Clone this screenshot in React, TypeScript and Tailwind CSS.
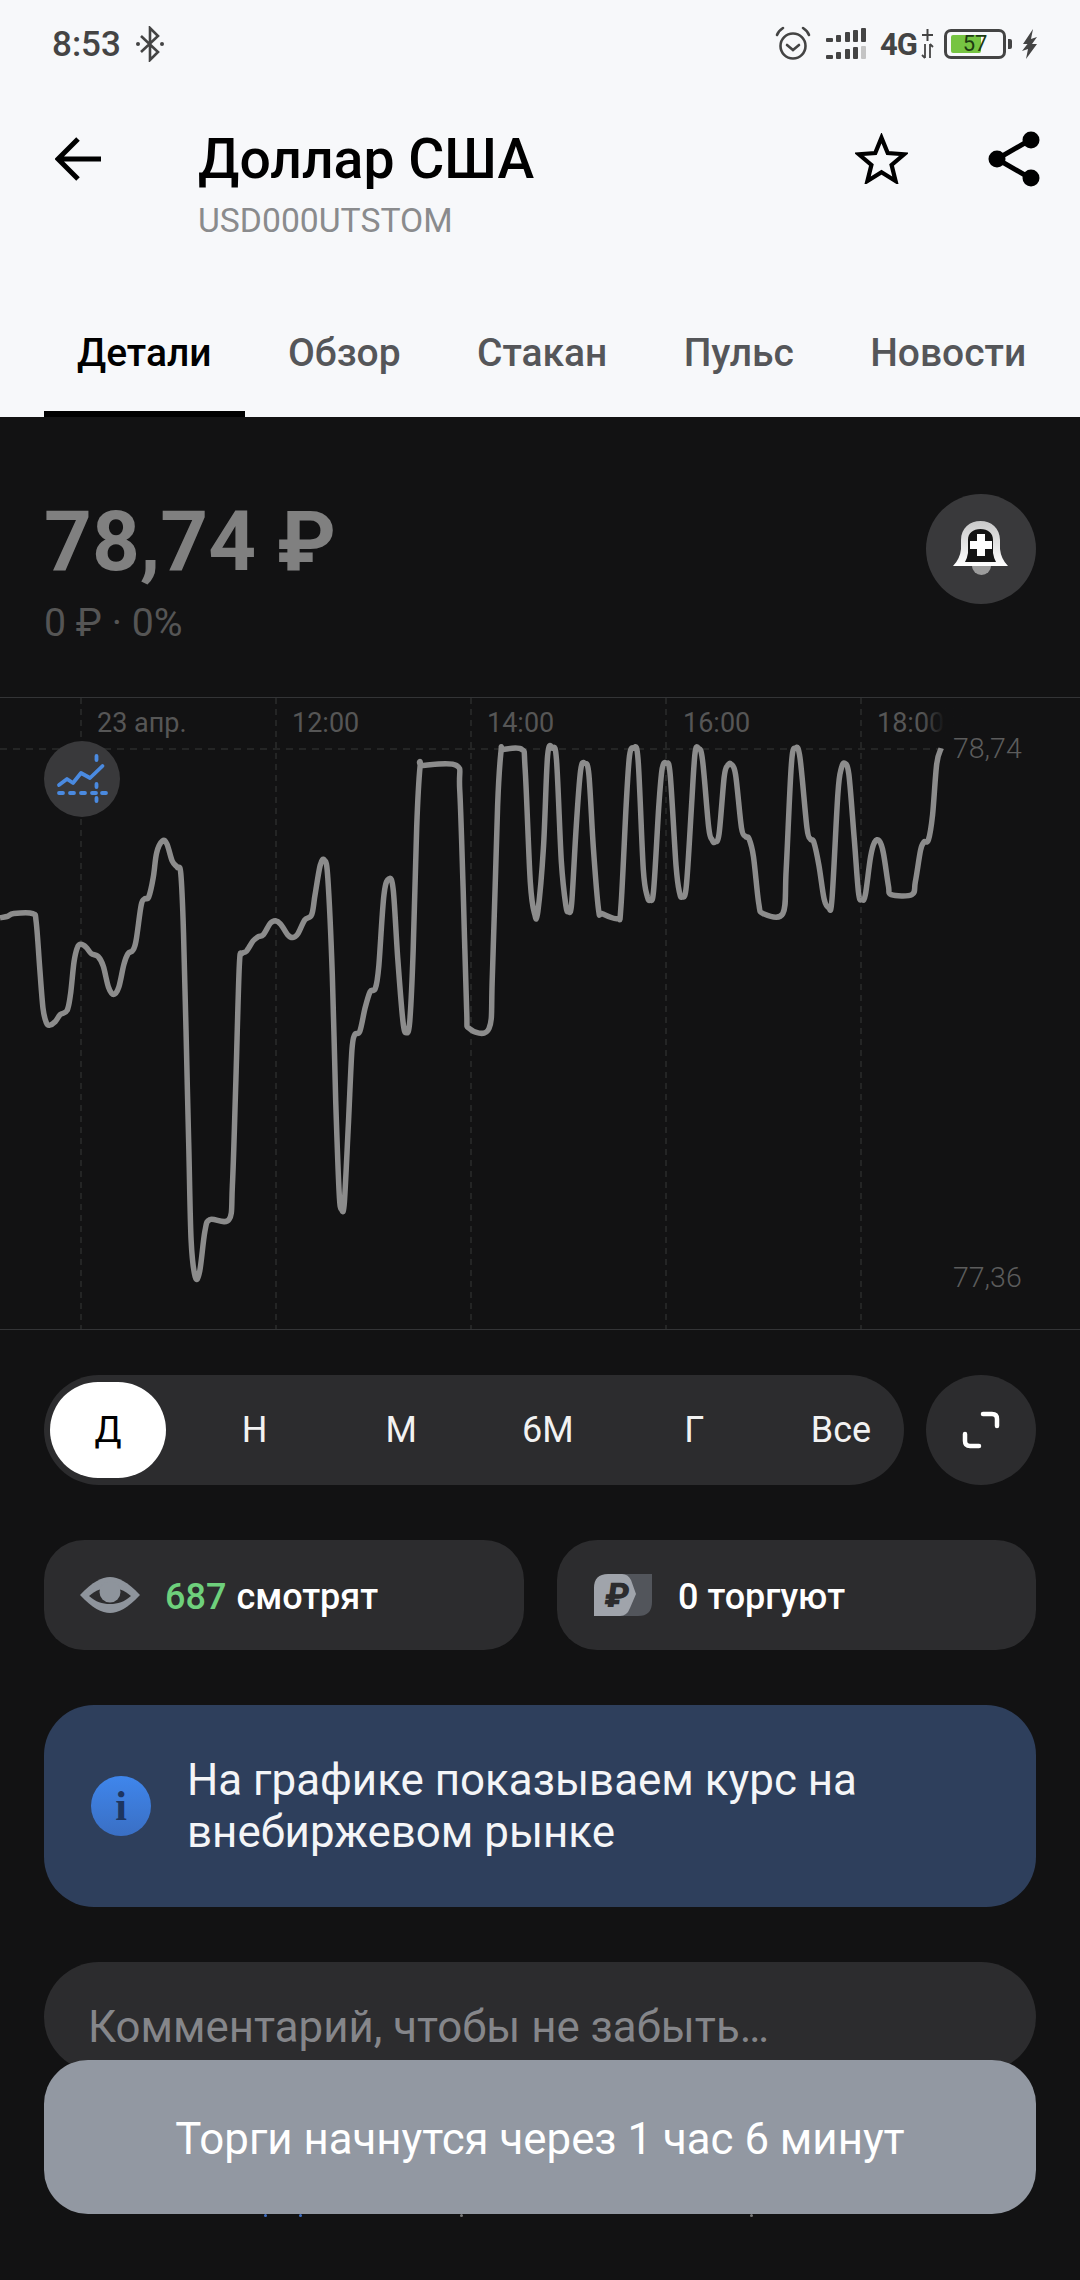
import React from "react";

const left: [number, number][] = [[0,565],[20,562],[40,555],[95,555],[105,575],[115,680],[125,780],[135,815],[145,820],[160,812],[175,795],[195,785],[205,745],[215,670],[225,635],[235,628],[250,635],[265,650],[285,657],[300,680],[315,730],[330,747],[345,730],[360,675],[372,650],[385,643],[395,620],[410,535],[420,520],[432,515],[445,470],[455,410],[472,382],[485,390],[500,430],[515,445],[525,460],[533,600],[540,830],[548,1100],[555,1330],[567,1418],[580,1405],[595,1310],[610,1282],[665,1282],[675,1200],[685,950],[695,680],[702,650],[715,645],[735,620],[750,610],[765,605],[785,578],[800,572],[815,580],[835,605],[850,612],[865,603],[885,570],[905,558],[915,510],[930,440],[942,428],[952,470],[965,700],[975,1000],[985,1220],[992,1258],[1000,1240],[1012,1050],[1022,880],[1030,843],[1045,835],[1060,780],[1075,740],[1090,733],[1100,680],[1115,510],[1130,472],[1142,500],[1155,660],[1170,810],[1180,838],[1190,810],[1200,640],[1210,350],[1220,205],[1228,203],[1325,203],[1335,260],[1345,500],[1355,780],[1363,828],[1420,828],[1430,700],[1445,300],[1455,170],[1462,165],[1515,165],[1525,210],[1540,480],[1553,557],[1562,550]];
const right: [number, number][] = [[10,400],[22,180],[36,162],[48,190],[62,430],[75,535],[83,550],[92,530],[105,350],[118,215],[130,198],[142,225],[155,400],[170,545],[180,555],[225,567],[235,540],[250,300],[260,180],[272,162],[285,190],[300,450],[312,515],[320,522],[330,500],[345,300],[355,210],[367,198],[378,225],[395,440],[405,505],[413,515],[425,490],[440,300],[450,175],[460,162],[472,190],[490,350],[500,380],[508,385],[520,365],[535,230],[545,203],[555,200],[568,225],[585,350],[597,372],[607,377],[620,420],[635,530],[648,555],[705,555],[715,450],[730,200],[742,162],[755,185],[775,350],[785,378],[795,385],[810,440],[825,520],[838,540],[848,520],[865,270],[875,210],[885,198],[897,225],[912,370],[925,505],[935,522],[945,510],[960,420],[972,385],[985,382],[997,410],[1012,490],[1020,510],[1080,510],[1090,480],[1105,405],[1115,385],[1128,380],[1140,320],[1152,200],[1165,162]];

const pts: [number, number][] = [
  ...left.map(([x, y]) => [x / 2.904, 680 + y / 2.376 - 698] as [number, number]),
  ...right.map(([x, y]) => [540 + x / 2.904, 680 + y / 2.376 - 698] as [number, number]),
];

function smooth(p: [number, number][]) {
  let d = `M${p[0][0].toFixed(1)} ${p[0][1].toFixed(1)}`;
  for (let i = 0; i < p.length - 1; i++) {
    const a = p[Math.max(0, i - 1)], b = p[i], c = p[i + 1], e = p[Math.min(p.length - 1, i + 2)];
    const k = 6;
    d += ` C${(b[0] + (c[0] - a[0]) / k).toFixed(1)} ${(b[1] + (c[1] - a[1]) / k).toFixed(1)} ${(c[0] - (e[0] - b[0]) / k).toFixed(1)} ${(c[1] - (e[1] - b[1]) / k).toFixed(1)} ${c[0].toFixed(1)} ${c[1].toFixed(1)}`;
  }
  return d;
}

const StatusIcons = () => (
  <div className="flex items-center">
    <svg width="36" height="36" viewBox="0 0 36 36" fill="none" stroke="#444" strokeWidth="2.6" strokeLinecap="round">
      <circle cx="18" cy="20" r="12.5" />
      <path d="M12 19l6 5 6-5" />
      <path d="M2 9c1-3 3-5 6-7M34 9c-1-3-3-5-6-7" />
    </svg>
    <svg className="ml-[15px]" width="41" height="32" viewBox="0 0 41 32" fill="#444">
      <rect x="0" y="10" width="7" height="4" rx="1" /><rect x="10" y="7" width="5" height="7" rx="1" /><rect x="19" y="4" width="5" height="10" rx="1" /><rect x="27" y="2" width="5" height="12" rx="1" /><rect x="35" y="0" width="5" height="14" rx="1" />
      <rect x="0" y="27" width="7" height="4" rx="1" /><rect x="10" y="24" width="5" height="7" rx="1" /><rect x="19" y="21" width="5" height="10" rx="1" /><rect x="27" y="19" width="5" height="12" rx="1" /><rect x="35" y="18" width="5" height="13" rx="1" fill="#c4c4c4" />
    </svg>
    <span className="ml-[13px] text-[31px] font-bold leading-none tracking-[-1px] text-[#444]">4G</span>
    <svg className="ml-[4px]" width="13" height="32" viewBox="0 0 13 32" fill="none" stroke="#444" strokeWidth="2">
      <path d="M6.500 1v12M1 7h11" />
      <path d="M4 16v14M1 27l3 3M9 30V16M9 16l3 3" strokeWidth="1.800" />
    </svg>
    <div className="relative ml-[10px] flex h-[30px] w-[62px] items-center justify-center rounded-[7px] border-[3px] border-[#444]">
      <div className="absolute left-[4px] top-[3px] h-[18px] w-[30px] rounded-[2px] bg-[#76c442]" />
      <span className="relative text-[22px] leading-none text-[#1d3a12]">57</span>
    </div>
    <div className="ml-[2px] h-[10px] w-[4px] rounded-r-[2px] bg-[#444]" />
    <svg className="ml-[9px]" width="17" height="30" viewBox="0 0 17 30" fill="#444">
      <path d="M12 0L2 15h4.500L1 22l6-2-2 10 11-15h-5l5-7-6 2z" />
    </svg>
  </div>
);

const Tab = ({ label, active }: { label: string; active?: boolean }) => (
  <div className={`relative flex h-full items-center whitespace-nowrap text-[39px] font-medium ${active ? "text-black" : "text-[#555659]"}`}>
    {label}
    {active && <div className="absolute bottom-0 left-[-33px] right-[-33px] h-[6px] bg-black" />}
  </div>
);

const ranges = ["Д", "Н", "М", "6М", "Г", "Все"];

const hours = [
  { x: 97, t: "23 апр." },
  { x: 292, t: "12:00" },
  { x: 487, t: "14:00" },
  { x: 683, t: "16:00" },
  { x: 877, t: "18:00" },
];

export default function App() {
  return (
    <div className="relative flex h-[2280px] w-[1080px] flex-col overflow-hidden bg-[#121213] [font-family:Roboto,sans-serif]">
      <div className="flex h-[417px] flex-col bg-[#f7f8fa]">
        <div className="flex h-[88px] items-center justify-between pl-[52px] pr-[42px]">
          <div className="flex items-center">
            <span className="text-[35px] font-medium leading-none text-[#444]">8:53</span>
            <svg className="ml-[14px]" width="30" height="36" viewBox="0 0 30 36" fill="none" stroke="#444" strokeWidth="2.600">
              <path d="M6 10l17 16-8 8V2l8 8L6 26" />
              <circle cx="3" cy="18" r="2" fill="#444" stroke="none" />
              <circle cx="27" cy="18" r="2" fill="#444" stroke="none" />
            </svg>
          </div>
          <StatusIcons />
        </div>
        <div className="flex h-[178px] items-start pl-[55px] pr-[40px]">
          <svg className="mt-[49px]" width="46" height="44" viewBox="0 0 46 44" fill="none" stroke="#000" strokeWidth="5">
            <path d="M46 22H4M23 2L3 22l20 20" />
          </svg>
          <div className="ml-[97px] flex-1 pt-[36px]">
            <div className="text-[55.300px] font-medium leading-[72px] text-black">Доллар США</div>
            <div className="mt-[6px] text-[33.700px] leading-[38px] text-[#8a8b8d]">USD000UTSTOM</div>
          </div>
          <svg className="mt-[45px]" width="53" height="51" viewBox="0 0 56 54" fill="none" stroke="#000" strokeWidth="4.500">
            <path d="M28 5l6.600 16.200 17.400 1.300-13.300 11.300 4.200 17L28 41.600l-14.900 9.200 4.200-17L4 22.500l17.400-1.300z" />
          </svg>
          <svg className="ml-[80px] mt-[43px]" width="52" height="56" viewBox="0 0 52 56" fill="none">
            <path d="M42 9L9 28l33 19" stroke="#000" strokeWidth="5" />
            <circle cx="43" cy="9" r="8.500" fill="#000" /><circle cx="9" cy="28" r="8.500" fill="#000" /><circle cx="43" cy="47" r="8.500" fill="#000" />
          </svg>
        </div>
        <div className="flex h-[151px] items-stretch gap-[76.300px] pl-[77px] pt-[23px]">
          <Tab label="Детали" active />
          <Tab label="Обзор" />
          <Tab label="Стакан" />
          <Tab label="Пульс" />
          <Tab label="Новости" />
        </div>
      </div>

      <div className="flex h-[280px] items-start justify-between px-[44px] pt-[81px]">
        <div>
          <div className="text-[83.500px] font-bold leading-[88px] text-[#808080]">78,74 ₽</div>
          <div className="mt-[15px] text-[39.300px] leading-[44px] text-[#555]">0 ₽ · 0%</div>
        </div>
        <div className="mt-[-4px] flex h-[110px] w-[110px] items-center justify-center rounded-full bg-[#39393b]">
          <svg className="mt-[-1px]" width="56" height="56" viewBox="0 0 56 56">
            <defs>
              <linearGradient id="bell" x1="0" y1="0" x2="0" y2="1">
                <stop offset="0" stopColor="#c9c9c9" /><stop offset="1" stopColor="#fff" />
              </linearGradient>
            </defs>
            <path d="M19 45H38A9.500 9 0 0 1 19 45Z" fill="#9c9c9c" />
            <path d="M8 19C8 7 17 0 27.500 0C38 0 47 7 47 19V28Q48 38 55 45H0Q7 38 8 28Z" fill="url(#bell)" />
            <path d="M15 19C15 12 20 8 27.500 8C35 8 40 12 40 19V32Q41 38 43 41H12Q14 38 15 32Z" fill="#141414" />
            <rect x="17" y="20" width="22" height="8" fill="#fff" /><rect x="24" y="13" width="8" height="22" fill="#fff" />
          </svg>
        </div>
      </div>

      <div className="relative h-[633px] border-y border-[#333436]">
        <svg className="absolute left-0 top-0" width="1080" height="631" viewBox="0 0 1080 631" fill="none">
          {[81, 276, 471, 666, 861].map((x) => (
            <line key={x} x1={x} y1="0" x2={x} y2="631" stroke="#2b2c2d" strokeWidth="1.500" strokeDasharray="6 5" />
          ))}
          <line x1="0" y1="51" x2="944" y2="51" stroke="#2b2c2d" strokeWidth="1.500" strokeDasharray="7 6" />
          <path d={smooth(pts)} stroke="#8c8c8c" strokeWidth="5.500" strokeLinejoin="round" />
        </svg>
        {hours.map((h) => (
          <span key={h.t} className="absolute top-[9px] whitespace-nowrap text-[27px] leading-[32px] text-[#565656]" style={{ left: h.x }}>{h.t}</span>
        ))}
        <div className="absolute left-[922px] top-[4px] h-[42px] w-[46px] bg-gradient-to-r from-transparent via-[#121213] to-[#121213]" />
        <span className="absolute left-[953px] top-[35px] text-[28.500px] font-light leading-[32px] text-[#5c5c5c]">78,74</span>
        <span className="absolute left-[953px] top-[564px] text-[28.500px] font-light leading-[32px] text-[#5c5c5c]">77,36</span>
        <div className="absolute left-[44px] top-[43px] flex h-[76px] w-[76px] items-center justify-center rounded-full bg-[#39393b]">
          <svg width="76" height="76" viewBox="0 0 76 76" fill="none" stroke="#4a8ae0" strokeWidth="3.800" strokeLinecap="round" strokeLinejoin="round">
            <path d="M15 44l8-6 6 4 8-10 9 5 12.500-12" />
            <path d="M15 52h4M26 52h4M37 52h4M48 52h4M58 52h4" />
            <path d="M52.500 15v4M52.500 43v3M52.500 57v3" />
          </svg>
        </div>
      </div>

      <div className="mt-[45px] flex justify-between px-[44px]">
        <div className="flex h-[110px] w-[860px] items-center gap-[30.600px] rounded-full bg-[#2c2c2e] pl-[6px]">
          {ranges.map((r, i) => (
            <div key={r} className={`flex h-[96px] w-[116px] shrink-0 items-center justify-center rounded-[48px] text-[36px] ${i === 0 ? "bg-white text-black" : "text-[#f2f2f2]"}`}>{r}</div>
          ))}
        </div>
        <div className="flex h-[110px] w-[110px] items-center justify-center rounded-full bg-[#2c2c2e]">
          <svg width="38" height="38" viewBox="0 0 38 38" fill="none" stroke="#fff" strokeWidth="4.500" strokeLinecap="round">
            <path d="M21 3H30Q35 3 35 8V15M3 23V30Q3 35 8 35H17" />
          </svg>
        </div>
      </div>

      <div className="mt-[55px] flex justify-between px-[44px]">
        <div className="flex h-[110px] w-[480px] items-center rounded-[40px] bg-[#2c2c2e] pl-[36px] text-[36px] font-medium">
          <svg width="60" height="36" viewBox="0 0 60 36">
            <path d="M0 18C12 5 22 0 30 0S48 5 60 18C48 31 38 36 30 36S12 31 0 18Z" fill="#8e949c" />
            <path d="M9 19C16 13 22 11 30 11S44 13 51 19C44 25 38 27 30 27S16 25 9 19Z" fill="#2c2c2e" />
            <circle cx="30" cy="15" r="10.500" fill="#8e949c" />
          </svg>
          <span className="ml-[25px] mt-[4px] text-[#6ed07c]">687</span>
          <span className="ml-[10px] mt-[4px] text-white">смотрят</span>
        </div>
        <div className="flex h-[110px] w-[479px] items-center rounded-[40px] bg-[#2c2c2e] pl-[37px] text-[36px] font-medium text-white">
          <svg width="58" height="42" viewBox="0 0 58 42">
            <path d="M20 0H58V28Q58 42 44 42H20Z" fill="#52555b" />
            <path d="M0 14Q0 0 14 0H28Q34 0 37 6L42 20L36 34Q33 42 26 42H0Z" fill="#a0a4ab" />
            <text x="9" y="33" fontSize="34" fontWeight="900" fill="#2c2c2e" transform="skewX(-8) translate(5 0)">₽</text>
          </svg>
          <span className="ml-[26px] mt-[4px]">0 торгуют</span>
        </div>
      </div>

      <div className="mx-[44px] mt-[55px] flex h-[202px] items-center rounded-[50px] bg-[#2e3f5c] pl-[47px]">
        <div className="flex h-[60px] w-[60px] items-center justify-center rounded-full bg-gradient-to-b from-[#3f86ec] to-[#3a6fc4] text-[42px] font-bold leading-none text-[#1d3560] [font-family:'Liberation_Serif',serif]">i</div>
        <div className="ml-[36px] text-[43.900px] leading-[52px] text-[#f4f5f7]">На графике показываем курс на<br />внебиржевом рынке</div>
      </div>

      <div className="mx-[44px] mt-[55px] flex h-[110px] items-center rounded-full bg-[#2c2c2e] pl-[44px] text-[43.800px] text-[#85868a]">
        <span className="mt-[22px]">Комментарий, чтобы не забыть…</span>
      </div>

      <div className="absolute left-[264px] top-[2214px] h-[3px] w-[3px] rounded-full bg-[#3f6fc4]" />
      <div className="absolute left-[299px] top-[2214px] h-[3px] w-[3px] rounded-full bg-[#3f6fc4]" />
      <div className="absolute left-[460px] top-[2214px] h-[3px] w-[3px] rounded-full bg-[#777]" />
      <div className="absolute left-[750px] top-[2214px] h-[3px] w-[3px] rounded-full bg-[#777]" />

      <div className="absolute left-[44px] top-[2060px] flex h-[154px] w-[992px] items-center justify-center rounded-[44px] bg-[#9298a2] pt-[5px] text-[43.800px] text-white">
        Торги начнутся через 1 час 6 минут
      </div>
    </div>
  );
}
